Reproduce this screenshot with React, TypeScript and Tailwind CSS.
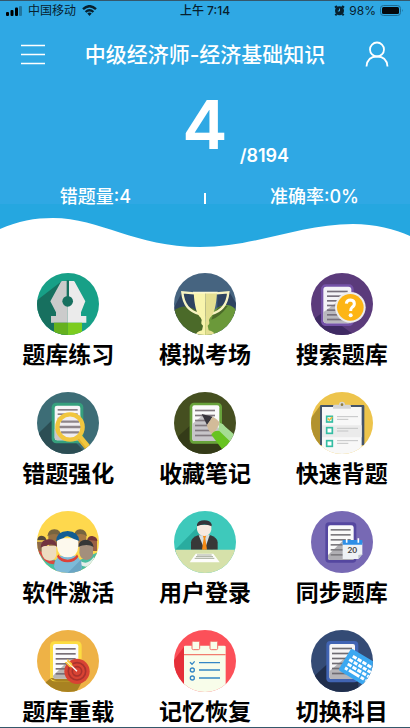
import type { ReactNode } from 'react'

// every badge is drawn on a 186 x 186 board and clipped to a circle
function Badge({ bg, children }: { bg: string; children: ReactNode }) {
  return (
    <svg viewBox="0 0 186 186" aria-hidden="true" className="size-[62px] rounded-full overflow-hidden">
      <rect width="186" height="186" fill={bg} />
      {children}
    </svg>
  )
}

function Lines({ x, y, w, step, count, color }: { x: number; y: number; w: number; step: number; count: number; color: string }) {
  return (
    <g fill={color}>
      {Array.from({ length: count }, (_, i) => (
        <rect key={i} x={x} y={y + i * step} width={w} height="5" />
      ))}
    </g>
  )
}

const PenIcon = () => (
  <Badge bg="#17a087">
    <path d="M0 82 L72 26 L92 24 L92 186 L0 186Z" fill="#17705f" />
    <path d="M92 24 H76 Q72 24 70 30 L40 85 L57 118 V129 H42 V149 H92Z" fill="#cbcbcb" />
    <path d="M92 24 H110 Q113 24 115 30 L145 85 L132 118 V129 H148 V149 H92Z" fill="#ebebeb" />
    <path d="M89 22 H96 V72 H89Z" fill="#17705f" />
    <circle cx="92" cy="85" r="16" fill="#17705f" />
    <path d="M51 149 H92 V186 H51Z" fill="#65b11e" />
    <path d="M92 149 H135 V186 H92Z" fill="#7ccc1f" />
  </Badge>
)

const TrophyIcon = () => (
  <Badge bg="#466480">
    <path d="M24 58 L60 57 L130 120 V60 L166 57 L186 90 V130 H0 V104Z" fill="#2e4360" />
    <path d="M0 112 Q28 92 56 106 Q92 122 92 186 H0Z" fill="#4b6a29" />
    <path d="M92 186 V150 Q125 92 160 96 Q178 98 186 112 V186Z" fill="#6b993a" />
    <path d="M118 124 L134 102 L162 98 Q140 130 112 140Z" fill="#4b6a29" />
    <path d="M61 61 L25 58 Q30 112 77 123" fill="none" stroke="#f7f3c2" strokeWidth="7" />
    <path d="M127 61 L163 58 Q158 112 111 123" fill="none" stroke="#f7f3c2" strokeWidth="7" />
    <path d="M59 57 H94 V186 H64 Q68 176 84 172 L87 158 Q80 154 82 148 Q86 142 80 134 Q62 120 59 57Z" fill="#f8f4ac" />
    <path d="M129 57 H94 V186 H124 Q120 176 104 172 L101 158 Q108 154 106 148 Q102 142 108 134 Q126 120 129 57Z" fill="#e4df91" />
    <path d="M57 59 H131" stroke="#fbf8cf" strokeWidth="5" />
  </Badge>
)

const SearchIcon = () => (
  <Badge bg="#5b3b7b">
    <path d="M0 144 L36 118 L130 186 H0Z" fill="#3f2a63" />
    <rect x="30" y="34" width="98" height="125" rx="14" fill="#7553a8" />
    <rect x="37" y="41" width="84" height="110" rx="9" fill="#f4f3f7" />
    <path d="M37 118 L86 82 H121 V151 H46 Q37 151 37 142Z" fill="#b9b8be" />
    <Lines x={48} y={53} w={62} step={14} count={7} color="#77707c" />
    <circle cx="118" cy="103" r="46" fill="#ededed" />
    <circle cx="118" cy="103" r="40" fill="#fdb515" />
    <path d="M106 92 Q107 81 119 81 Q130 82 130 92 Q130 99 123 103 Q119 106 119 114" fill="none" stroke="#fff" strokeWidth="9" />
    <circle cx="119" cy="127" r="6" fill="#fff" />
  </Badge>
)

const MistakeIcon = () => (
  <Badge bg="#3d6d76">
    <path d="M0 128 L48 82 L150 186 H0Z" fill="#2c4e54" />
    <rect x="44" y="32" width="95" height="122" rx="14" fill="#36a07d" />
    <rect x="53" y="41" width="77" height="104" rx="7" fill="#f7f5f7" />
    <path d="M53 112 L96 70 H130 V145 H60 Q53 145 53 138Z" fill="#cac7ca" />
    <Lines x={62} y={51} w={60} step={13} count={5} color="#8a7f85" />
    <circle cx="99" cy="105" r="38" fill="#f0edf0" />
    <g stroke="#8d8489" strokeWidth="7">
      <path d="M72 89 H126 M66 105 H132 M72 121 H126" />
    </g>
    <circle cx="99" cy="105" r="38" fill="none" stroke="#f1c63e" strokeWidth="13" />
    <path d="M124 132 L152 166" stroke="#f1c63e" strokeWidth="19" />
    <path d="M124 142 L145 168" stroke="#deb02f" strokeWidth="5" />
  </Badge>
)

const NotesIcon = () => (
  <Badge bg="#454f20">
    <path d="M0 144 L47 102 V155 H144 V186 H0Z" fill="#343b18" />
    <rect x="47" y="32" width="97" height="123" rx="13" fill="#68a33b" />
    <rect x="55" y="40" width="81" height="107" rx="6" fill="#fafafa" />
    <path d="M55 96 L88 68 L136 110 V147 H62 Q55 147 55 140Z" fill="#c7c5c9" />
    <Lines x={63} y={53} w={60} step={15} count={6} color="#81797f" />
    <path d="M83 66 L116 74 L99 99Z" fill="#38353c" />
    <path d="M116 74 Q132 82 138 94 L116 130 Q100 112 99 99Z" fill="#d2bb99" />
    <path d="M136 92 Q148 94 154 104 L186 132 V160 L170 158 L132 122Z" fill="#a5dd93" />
    <path d="M112 128 Q120 114 136 117 L174 154 L158 174 H146Z" fill="#68c321" />
  </Badge>
)

const ChecklistIcon = () => (
  <Badge bg="#edc44c">
    <path d="M0 78 L28 40 V160 H0Z" fill="#b2922e" />
    <path d="M27 42 Q27 39 30 39 H157 Q160 39 160 42 V160 H27Z" fill="#44546a" />
    <path d="M33 45 H152 V186 H33Z" fill="#f8f8f8" />
    <path d="M33 100 H152 V136 H33Z" fill="#ebebeb" />
    <path d="M66 50 V42 Q66 38 72 38 H84 Q84 29 93 29 Q102 29 102 38 H114 Q120 38 120 42 V50Z" fill="#d4d5d7" />
    <circle cx="93" cy="38" r="4" fill="#8f7c3a" />
    <g fill="#fff" stroke="#34bda3" strokeWidth="5">
      <rect x="47" y="73" width="17" height="17" />
      <rect x="47" y="107" width="17" height="17" />
      <rect x="47" y="146" width="17" height="17" />
    </g>
    <path d="M50 79 L55 84 L64 75" fill="none" stroke="#eebc46" strokeWidth="5" />
    <path d="M78 74 H141 M78 82 H112 M78 109 H141 M78 117 H112 M78 146 H141 M78 154 H112" stroke="#c3c4c5" strokeWidth="3" />
  </Badge>
)

const CrowdIcon = () => (
  <Badge bg="#fed84d">
    <path d="M0 92 H30 V130 H0Z" fill="#8a684b" />
    <path d="M0 88 Q2 74 14 74 Q28 76 28 88Z" fill="#56493c" />
    <path d="M150 88 H180 V120 H150Z" fill="#9a6045" />
    <path d="M150 88 Q153 74 166 75 Q181 78 181 90Z" fill="#74373a" />
    <rect x="34" y="64" width="36" height="44" rx="12" fill="#957044" />
    <path d="M31 76 Q34 54 53 55 Q72 56 72 76 Q52 62 31 76Z" fill="#77643f" />
    <rect x="112" y="64" width="36" height="44" rx="12" fill="#a57845" />
    <path d="M110 76 Q114 54 130 55 Q148 56 150 76 Q132 62 110 76Z" fill="#77643f" />
    <path d="M0 126 Q10 124 20 142 L62 148 V186 H0Z" fill="#45c1a5" />
    <path d="M4 118 L14 122 Q22 150 54 148 L52 160 Q20 160 4 118Z" fill="#db4940" />
    <path d="M14 104 H58 V132 Q54 149 38 149 Q18 148 14 126Z" fill="#eddcc0" />
    <path d="M11 110 Q12 84 37 85 Q58 86 60 106 Q44 96 28 104 Q20 104 11 110Z" fill="#71343e" />
    <path d="M122 150 L186 122 V186 H122Z" fill="#49bda0" />
    <path d="M124 145 Q148 168 170 139 L174 145 Q156 180 126 159Z" fill="#e6eee9" />
    <path d="M128 102 H168 V130 Q164 147 148 147 Q130 145 127 126Z" fill="#a38f7c" />
    <path d="M123 107 Q127 86 146 86 Q167 87 170 108 Q152 96 123 107Z" fill="#353736" />
    <path d="M51 168 Q52 142 70 134 H116 Q134 142 134 172 L124 186 H62Z" fill="#7dbad8" />
    <path d="M92 186 L133 145 V178 L120 186Z" fill="#6aa5c4" />
    <path d="M64 130 Q70 145 92 146 Q114 145 120 130 L124 137 Q114 154 92 154 Q70 154 60 137Z" fill="#dd4139" />
    <path d="M60 82 H124 V106 Q122 139 92 139 Q62 139 60 106Z" fill="#fdf9ed" />
    <path d="M57 91 Q59 60 92 60 Q124 61 127 90 Q111 85 98 78 Q88 72 80 81 Q70 84 57 91Z" fill="#125d93" />
  </Badge>
)

const LoginIcon = () => (
  <Badge bg="#3ec9bb">
    <path d="M0 120 L73 46 L120 120 V130 H0Z" fill="#29ac9f" />
    <path d="M51 116 V94 Q52 80 72 73 H110 Q130 80 131 94 V116Z" fill="#383838" />
    <path d="M74 73 L92 116 L107 72Z" fill="#d6dee0" />
    <path d="M86 73 H97 L94 82 L99 116 H84 L89 82Z" fill="#f68b16" />
    <path d="M69 42 H112 V56 Q109 74 91 75 Q72 73 69 56Z" fill="#f8e9df" />
    <path d="M69 46 V40 Q73 28 91 28 Q109 28 113 40 V46 Q91 35 69 46Z" fill="#363439" />
    <path d="M0 116 H186 V186 H0Z" fill="#d6e1aa" />
    <path d="M65 128 H118 L137 154 H47Z" fill="#fdfdfb" />
    <path d="M69 132 H113 M66 137 H117 M62 142 H121" stroke="#a5ab9c" strokeWidth="3" />
  </Badge>
)

const SyncIcon = () => (
  <Badge bg="#7769b4">
    <rect x="43" y="34" width="93" height="121" rx="11" fill="#5547a0" />
    <rect x="51" y="43" width="77" height="104" rx="7" fill="#fafafa" />
    <path d="M51 132 L94 91 H128 V147 H58 Q51 147 51 140Z" fill="#b0afb3" />
    <Lines x={59} y={54} w={60} step={15} count={6} color="#7e7c80" />
    <path d="M95 95 H154 V130 L142 144 H95Z" fill="#eef2f5" />
    <path d="M154 130 L142 132 V144Z" fill="#bcc6cd" />
    <path d="M95 87 H154 V101 H95Z" fill="#2d8fe7" />
    <path d="M107 82 V95 M142 82 V95" stroke="#fff" strokeWidth="5" />
    <text x="124" y="127" textAnchor="middle" fontSize="25" fontWeight="700" fill="#444" className="font-[Lato,sans-serif]">20</text>
  </Badge>
)

const ReloadIcon = () => (
  <Badge bg="#eeb246">
    <path d="M24 158 L50 137 L138 150 L118 186 H50Z" fill="#a88221" />
    <rect x="39" y="34" width="95" height="120" rx="13" fill="#fcdc42" />
    <path d="M40 144 Q50 154 64 154 H122 L110 144 H50Z" fill="#a88221" />
    <rect x="48" y="42" width="76" height="104" rx="7" fill="#fbfbfc" />
    <path d="M48 137 L94 92 H124 V146 H54 Q48 146 48 140Z" fill="#b9b6b2" />
    <Lines x={56} y={54} w={60} step={15} count={6} color="#797077" />
    <circle cx="120" cy="124" r="38" fill="#d84333" />
    <circle cx="120" cy="124" r="26" fill="none" stroke="#a9322c" strokeWidth="5" />
    <circle cx="120" cy="124" r="14" fill="none" stroke="#a9322c" strokeWidth="5" />
    <path d="M94 98 L120 124" stroke="#fff" strokeWidth="4" />
    <path d="M83 96 L91 96 V86 L106 101 V112 H98Z" fill="#f8c63a" />
    <path d="M91 96 L106 111" stroke="#fff" strokeWidth="3" />
  </Badge>
)

const MemoryIcon = () => (
  <Badge bg="#fc5059">
    <path d="M0 90 L32 48 V165 H0Z" fill="#e52f39" />
    <path d="M30 50 Q30 47 34 47 H151 Q155 47 155 50 V186 H30Z" fill="#f8fdea" />
    <path d="M30 72 H155 V76 H30Z" fill="#f17c6e" />
    <g fill="#f8fdea" stroke="#f17068" strokeWidth="3">
      <rect x="54" y="34" width="23" height="25" rx="4" />
      <rect x="108" y="34" width="23" height="25" rx="4" />
    </g>
    <g fill="none" stroke="#3486c5" strokeWidth="4">
      <path d="M48 97 L54 103 L62 94 M75 98 H138 M75 120 H138 M75 144 H138" />
      <circle cx="55" cy="120" r="6" />
      <circle cx="55" cy="144" r="6" />
    </g>
  </Badge>
)

const SubjectIcon = () => (
  <Badge bg="#344b75">
    <path d="M0 147 L48 103 L142 130 V186 H0Z" fill="#202e4c" />
    <rect x="46" y="33" width="96" height="124" rx="12" fill="#4164b3" />
    <rect x="55" y="42" width="77" height="105" rx="6" fill="#f6f5f6" />
    <path d="M55 124 L104 82 H132 V147 H62 Q55 147 55 140Z" fill="#b6b5b9" />
    <Lines x={63} y={53} w={60} step={15} count={6} color="#6f6c72" />
    <g transform="translate(121 55) rotate(31)">
      <rect width="110" height="76" rx="7" fill="#3ba8f1" />
      <g fill="none" stroke="#fff" strokeWidth="9">
        <path d="M16 18 H100" strokeDasharray="13 4" />
        <path d="M12 32 H100" strokeDasharray="12 4" />
        <path d="M15 46 H100" strokeDasharray="13 4" />
        <path d="M14 60 H23 M28 60 H64 M69 60 H80 M85 60 H96" />
      </g>
    </g>
  </Badge>
)

const menu = [
  { label: '题库练习', Icon: PenIcon },
  { label: '模拟考场', Icon: TrophyIcon },
  { label: '搜索题库', Icon: SearchIcon },
  { label: '错题强化', Icon: MistakeIcon },
  { label: '收藏笔记', Icon: NotesIcon },
  { label: '快速背题', Icon: ChecklistIcon },
  { label: '软件激活', Icon: CrowdIcon },
  { label: '用户登录', Icon: LoginIcon },
  { label: '同步题库', Icon: SyncIcon },
  { label: '题库重载', Icon: ReloadIcon },
  { label: '记忆恢复', Icon: MemoryIcon },
  { label: '切换科目', Icon: SubjectIcon },
]

function StatusBar() {
  return (
    <div className="grid grid-cols-[1fr_auto_1fr] items-center h-[19px] px-[6px] text-xs leading-none text-[#07202e]">
      <div className="flex items-center gap-[6px]">
        <svg viewBox="0 0 16 10" aria-hidden="true" className="w-4 h-[10px]">
          <rect x="0" y="6" width="3" height="4" rx="1" />
          <rect x="4.5" y="4" width="3" height="6" rx="1" />
          <rect x="9" y="1.5" width="3" height="8.5" rx="1" />
          <rect x="13" y="0" width="3" height="10" rx="1" opacity=".3" />
        </svg>
        <span>中国移动</span>
        <svg viewBox="0 0 15 11" aria-hidden="true" className="w-[15px] h-[11px]" fill="none" stroke="#07202e" strokeWidth="2.4">
          <path d="M1 4.2 Q7.5 -1.8 14 4.2 M3.6 7 Q7.5 3.3 11.4 7" />
          <path d="M5.3 8.6 Q7.5 6.6 9.7 8.6 L7.5 11Z" fill="#07202e" stroke="none" />
        </svg>
      </div>
      <span className="font-medium">上午 7:14</span>
      <div className="flex items-center justify-end gap-1">
        <svg viewBox="0 0 11 11" aria-hidden="true" className="size-[11px]">
          <circle cx="5.5" cy="5.8" r="4.5" fill="#07202e" />
          <path d="M1 2.6 L3 1 M10 2.6 L8 1 M2.4 9 L1.4 10.4 M8.6 9 L9.6 10.4" stroke="#07202e" strokeWidth="2" />
          <path d="M5.5 3.6 V6 H3.8" fill="none" stroke="#2fa8e4" />
        </svg>
        <span>98%</span>
        <svg viewBox="0 0 24 11" aria-hidden="true" className="w-6 h-[11px]">
          <rect x=".5" y=".5" width="20" height="10" rx="3" fill="none" stroke="#1d6c95" />
          <rect x="2" y="2" width="17" height="7" rx="1.5" fill="#04080b" />
          <path d="M22 4 Q23.5 5.5 22 7Z" fill="#1d6c95" />
        </svg>
      </div>
    </div>
  )
}

export default function App() {
  return (
    <div className="min-h-screen bg-white border-y border-y-[#35576b] font-[Inter,'Noto_Sans_CJK_SC',sans-serif]">
      <header className="bg-[#2fa8e4] text-white">
        <StatusBar />

        <div className="flex items-center justify-between h-[68px] px-5">
          <button type="button" aria-label="菜单" className="size-[26px]">
            <svg viewBox="0 0 26 26" className="size-full" stroke="#fff" strokeWidth="1.6">
              <path d="M1 4.5 H25 M1 13.5 H25 M1 22.5 H25" />
            </svg>
          </button>
          <h1 className="text-[21px] leading-none font-medium">中级经济师-经济基础知识</h1>
          <button type="button" aria-label="个人中心" className="size-[26px]">
            <svg viewBox="0 0 26 26" className="size-full" fill="none" stroke="#fff" strokeWidth="1.8">
              <circle cx="13" cy="8.5" r="7" />
              <path d="M2.5 25.5 C3 19 7 15.5 13 15.5 C19 15.5 23 19 23.5 25.5" />
            </svg>
          </button>
        </div>

        <div className="grid grid-cols-[1fr_auto_1fr] items-end h-20">
          <span className="col-start-2 pb-[10px] text-[68px] leading-[68px] font-semibold">4</span>
          <span className="ml-3 pb-[2px] text-lg leading-5 font-semibold">/8194</span>
        </div>

        <div className="grid grid-cols-[1fr_2px_1fr] items-end gap-[13px] h-9 text-lg leading-[14px] font-medium">
          <span className="text-center">错题量:4</span>
          <span className="h-[11px] bg-white" />
          <span className="text-center">准确率:0%</span>
        </div>

        <svg viewBox="0 0 410 46" preserveAspectRatio="none" aria-hidden="true" className="block w-full h-[46px] bg-[#25a7e0]">
          <path d="M0 25 C18 17 35 14 53 14 C100 14 135 43 200 43 C255 43 300 20 353 20 C375 20 395 25 410 32 V46 H0Z" fill="#fff" />
        </svg>
      </header>

      <nav className="grid grid-cols-3 gap-y-[23px] pt-[23px]">
        {menu.map(({ label, Icon }) => (
          <button key={label} type="button" className="flex flex-col items-center gap-[6px]">
            <Icon />
            <span className="text-[23px] leading-7 font-bold text-black">{label}</span>
          </button>
        ))}
      </nav>
    </div>
  )
}
